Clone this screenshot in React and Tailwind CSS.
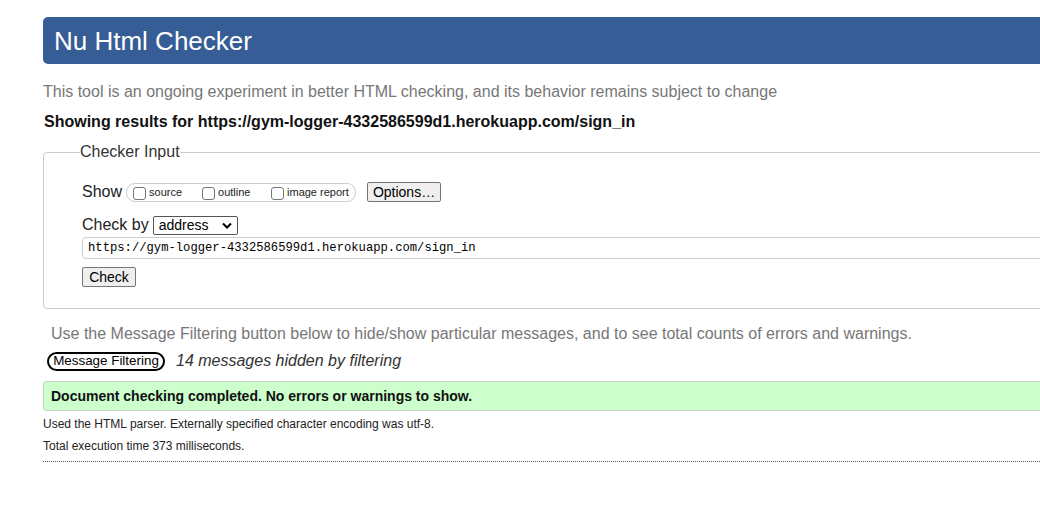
function Box() {
    return <span className="inline-block w-[13px] h-[13px] border border-[#767676] rounded-[3px] bg-white mr-[3px] translate-y-[1px]"></span>
}

export default function App() {
    return (
        <div className="w-[1040px] h-[513px] overflow-hidden bg-white font-['Liberation_Sans',Arial,sans-serif]">
            <div className="w-[1200px] pl-[43px] pt-[17px]">
                <div className="h-[47px] bg-[#365d95] rounded-l-[5px] flex items-center pl-[11px]">
                    <h1 className="text-[26px] text-white leading-none">Nu Html Checker</h1>
                </div>

                <p className="mt-[18px] text-[16px] leading-[20px] text-[#777]">
                    This tool is an ongoing experiment in better HTML checking, and its behavior remains subject to change
                </p>
                <p className="mt-[10px] pl-[1px] text-[16px] leading-[20px] font-bold text-[#111]">
                    Showing results for https://gym-logger-4332586599d1.herokuapp.com/sign_in
                </p>

                <fieldset className="mt-[10px] border border-[#ccc] rounded-[4px] pl-[36px] pb-[19px]">
                    <legend className="text-[16px] leading-[20px] text-[#333]">Checker Input</legend>

                    <div className="mt-[20px] pl-[2px] flex items-center h-[20px] text-[16px] text-[#222]">
                        <span>Show</span>
                        <div className="ml-[4px] h-[19px] w-[230px] border border-[#ccc] rounded-[9px] flex items-center pl-[6px] text-[11px] text-[#222]">
                            <label className="flex items-center w-[69px]"><Box />source</label>
                            <label className="flex items-center w-[69px]"><Box />outline</label>
                            <label className="flex items-center"><Box />image report</label>
                        </div>
                        <button className="ml-[11px] h-[20px] w-[74px] bg-[#efefef] border border-[#767676] rounded-[2px] text-[14px] leading-none text-black">Options…</button>
                    </div>

                    <div className="mt-[13px] pl-[2px] flex items-center h-[20px] text-[16px] text-[#222]">
                        <span>Check by</span>
                        <div className="ml-[4px] h-[19px] w-[85px] border border-[#555] rounded-[2px] flex items-center justify-between pl-[5px] pr-[5px] text-[14px] text-black">
                            <span>address</span>
                            <svg width="10" height="7" viewBox="0 0 10 7">
                                <path d="M1 1.5 L5 5.5 L9 1.5" fill="none" stroke="#000" strokeWidth="2" />
                            </svg>
                        </div>
                    </div>

                    <div className="mt-[2px] ml-[2px] h-[22px] border border-[#ccc] rounded-[4px] flex items-center pl-[5px] pt-[1px] font-['Liberation_Mono',monospace] text-[12.2px] text-black">
                        https://gym-logger-4332586599d1.herokuapp.com/sign_in
                    </div>

                    <button className="mt-[8px] ml-[2px] h-[20px] w-[54px] bg-[#efefef] border border-[#767676] rounded-[2px] text-[14px] leading-none text-black">Check</button>
                </fieldset>

                <p className="mt-[15px] pl-[8px] text-[16px] leading-[20px] text-[#777]">
                    Use the Message Filtering button below to hide/show particular messages, and to see total counts of errors and warnings.
                </p>

                <div className="mt-[7px] pl-[4px] flex items-center h-[20px]">
                    <button className="h-[19px] w-[118px] border-2 border-black rounded-full text-[13.4px] leading-none text-black">Message Filtering</button>
                    <span className="ml-[11px] text-[16px] italic text-[#333]">14 messages hidden by filtering</span>
                </div>

                <div className="mt-[10px] h-[30px] bg-[#ccffcc] border border-[#ccc] rounded-l-[3px] flex items-center pl-[7px] text-[14px] font-bold text-[#111]">
                    Document checking completed. No errors or warnings to show.
                </div>

                <p className="mt-[5px] text-[12px] leading-[16px] text-[#222]">
                    Used the HTML parser. Externally specified character encoding was utf-8.
                </p>
                <p className="mt-[6px] text-[12px] leading-[16px] text-[#222]">
                    Total execution time 373 milliseconds.
                </p>
                <div className="mt-[7px] border-b border-dotted border-[#555]"></div>
            </div>
        </div>
    )
}
